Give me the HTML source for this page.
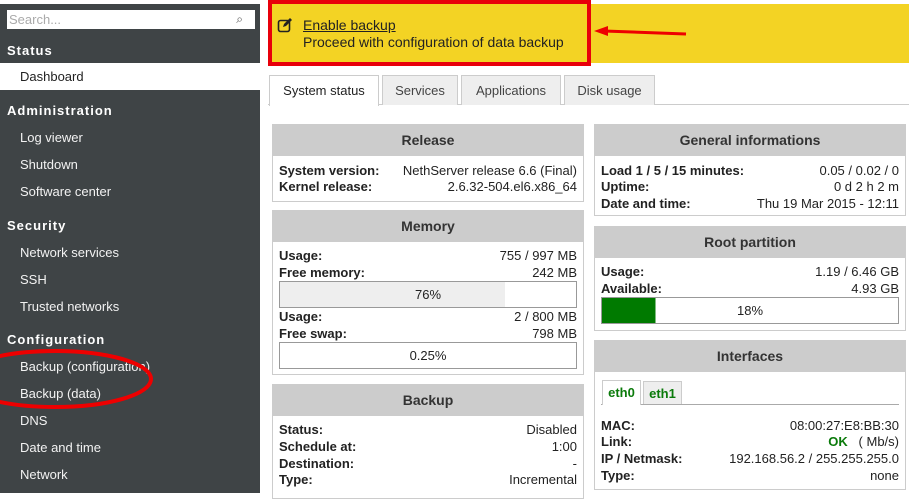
<!DOCTYPE html>
<html><head><meta charset="utf-8"><style>
*{box-sizing:border-box;margin:0;padding:0}
body{width:909px;height:493px;overflow:hidden;background:#fff;font-family:"Liberation Sans","DejaVu Sans",sans-serif;font-size:13px;color:#222;position:relative}
.a{position:absolute}
#side{left:0;top:4px;width:260px;height:489px;background:#3f4446;color:#fff}
.sh{position:absolute;left:7px;font-weight:bold;font-size:13px;letter-spacing:1px}
.si{position:absolute;left:20px;font-size:13px;color:#f2f2f2}
.box{position:absolute;border:1px solid #ccc;background:#fff}
.hd{background:#ccc;height:31px;line-height:31px;text-align:center;font-weight:bold;font-size:14px;color:#333}
.r{position:absolute;left:6px;right:6px;height:17px;line-height:17px}
.r b{float:left;color:#222}
.r span{float:right}
.bar{position:absolute;left:6px;right:6px;height:27px;border:1px solid #999;text-align:center;line-height:25px}
.tab{position:absolute;top:75px;height:30px;line-height:30px;text-align:center;background:#eee;border:1px solid #ccc;border-bottom:none;color:#444}
</style></head><body>
<div id="side" class="a">
 <div class="a" style="left:7px;top:6px;width:248px;height:19px;background:#fff;color:#aaa;line-height:19px;padding-left:2px">Search...<span style="position:absolute;right:12px;color:#555;font-size:12px">&#x2315;</span></div>
 <div class="sh" style="top:39px">Status</div>
 <div class="a" style="left:0;top:59px;width:260px;height:27px;background:#fff;color:#222;line-height:27px;padding-left:20px">Dashboard</div>
 <div class="sh" style="top:99px">Administration</div>
 <div class="si" style="top:126px">Log viewer</div>
 <div class="si" style="top:153px">Shutdown</div>
 <div class="si" style="top:180px">Software center</div>
 <div class="sh" style="top:214px">Security</div>
 <div class="si" style="top:241px">Network services</div>
 <div class="si" style="top:268px">SSH</div>
 <div class="si" style="top:295px">Trusted networks</div>
 <div class="sh" style="top:328px">Configuration</div>
 <div class="si" style="top:355px">Backup (configuration)</div>
 <div class="si" style="top:382px">Backup (data)</div>
 <div class="si" style="top:409px">DNS</div>
 <div class="si" style="top:436px">Date and time</div>
 <div class="si" style="top:463px">Network</div>
</div>
<svg class="a" style="left:0;top:345px" width="170" height="70"><ellipse cx="55" cy="34" rx="96" ry="28" fill="none" stroke="#e00" stroke-width="4"/></svg>

<div class="a" style="left:268px;top:4px;width:641px;height:59px;background:#f3d324"></div>
<div class="a" style="left:268px;top:0;width:323px;height:66px;border:4px solid #e8000a"></div>
<svg class="a" style="left:277px;top:17px" width="16" height="16"><rect x="1.5" y="3.5" width="11" height="11" rx="2" fill="none" stroke="#222" stroke-width="1.6"/><path d="M6 10 L7 7 L13 1 L15 3 L9 9 Z" fill="#222"/></svg>
<div class="a" style="left:303px;top:17px;font-size:14px;line-height:17px;color:#222"><u>Enable backup</u><br>Proceed with configuration of data backup</div>
<svg class="a" style="left:590px;top:24px" width="100" height="20"><line x1="14" y1="7" x2="96" y2="10" stroke="#e00" stroke-width="3"/><polygon points="4,7 18,2 18,12" fill="#e00"/></svg>

<div class="a" style="left:268px;top:104px;width:641px;border-top:1px solid #ccc"></div>
<div class="tab" style="left:269px;width:110px;background:#fff;height:31px;color:#222">System status</div>
<div class="tab" style="left:382px;width:76px">Services</div>
<div class="tab" style="left:461px;width:100px">Applications</div>
<div class="tab" style="left:564px;width:91px">Disk usage</div>

<div class="box" style="left:272px;top:124px;width:312px;height:78px"><div class="hd">Release</div>
 <div class="r" style="top:37px"><b>System version:</b><span>NethServer release 6.6 (Final)</span></div>
 <div class="r" style="top:53px"><b>Kernel release:</b><span>2.6.32-504.el6.x86_64</span></div></div>

<div class="box" style="left:272px;top:210px;width:312px;height:165px"><div class="hd">Memory</div>
 <div class="r" style="top:36px"><b>Usage:</b><span>755 / 997 MB</span></div>
 <div class="r" style="top:53px"><b>Free memory:</b><span>242 MB</span></div>
 <div class="bar" style="top:70px;background:linear-gradient(90deg,#eee 0,#eee 76%,#fff 76%)">76%</div>
 <div class="r" style="top:97px"><b>Usage:</b><span>2 / 800 MB</span></div>
 <div class="r" style="top:114px"><b>Free swap:</b><span>798 MB</span></div>
 <div class="bar" style="top:131px">0.25%</div></div>

<div class="box" style="left:272px;top:384px;width:312px;height:115px"><div class="hd">Backup</div>
 <div class="r" style="top:36px"><b>Status:</b><span>Disabled</span></div>
 <div class="r" style="top:53px"><b>Schedule at:</b><span>1:00</span></div>
 <div class="r" style="top:70px"><b>Destination:</b><span>-</span></div>
 <div class="r" style="top:86px"><b>Type:</b><span>Incremental</span></div></div>

<div class="box" style="left:594px;top:124px;width:312px;height:92px"><div class="hd">General informations</div>
 <div class="r" style="top:37px"><b>Load 1 / 5 / 15 minutes:</b><span>0.05 / 0.02 / 0</span></div>
 <div class="r" style="top:53px"><b>Uptime:</b><span>0 d 2 h 2 m</span></div>
 <div class="r" style="top:70px"><b>Date and time:</b><span>Thu 19 Mar 2015 - 12:11</span></div></div>

<div class="box" style="left:594px;top:226px;width:312px;height:105px"><div class="hd">Root partition</div>
 <div class="r" style="top:36px"><b>Usage:</b><span>1.19 / 6.46 GB</span></div>
 <div class="r" style="top:53px"><b>Available:</b><span>4.93 GB</span></div>
 <div class="bar" style="top:70px;background:linear-gradient(90deg,#007a00 0,#007a00 18%,#fff 18%)">18%</div></div>

<div class="box" style="left:594px;top:340px;width:312px;height:150px"><div class="hd">Interfaces</div>
 <div class="a" style="left:6px;right:6px;top:63px;border-top:1px solid #aaa"></div>
 <div class="a" style="left:7px;top:39px;width:39px;height:25px;background:#fff;border:1px solid #ccc;border-bottom:none;color:#0a7a0a;font-weight:bold;text-align:center;line-height:24px">eth0</div>
 <div class="a" style="left:48px;top:40px;width:39px;height:23px;background:#eee;border:1px solid #ccc;border-bottom:none;color:#0a7a0a;font-weight:bold;text-align:center;line-height:23px">eth1</div>
 <div class="r" style="top:76px"><b>MAC:</b><span>08:00:27:E8:BB:30</span></div>
 <div class="r" style="top:92px"><b>Link:</b><span><b style="color:#0a7a0a;float:none">OK</b>&nbsp;&nbsp;&nbsp;( Mb/s)</span></div>
 <div class="r" style="top:109px"><b>IP / Netmask:</b><span>192.168.56.2 / 255.255.255.0</span></div>
 <div class="r" style="top:126px"><b>Type:</b><span>none</span></div></div>
</body></html>
